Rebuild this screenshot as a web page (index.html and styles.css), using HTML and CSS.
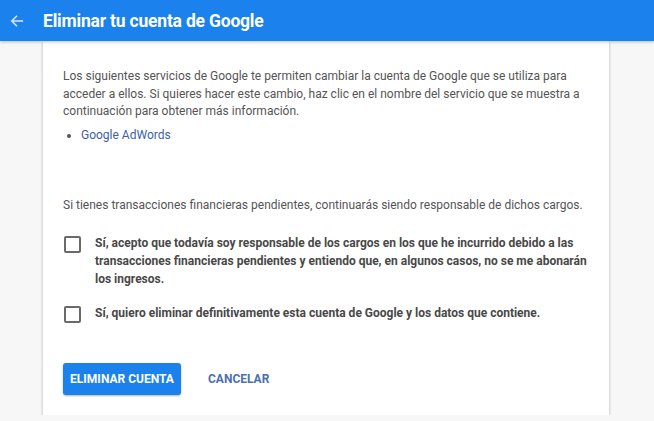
FILE: index.html
```html
<!DOCTYPE html>
<html>
<head>
<meta charset="utf-8">
<link rel="stylesheet" href="styles.css">
</head>
<body>
<div class="topbar">
	<span class="back">
		<svg width="14" height="14" viewBox="0 0 16 16"><path d="M15 8H2.5M8 2L2 8l6 6" fill="none" stroke="#d6e8fb" stroke-width="1.8"/></svg>
	</span>
	<span class="title">Eliminar tu cuenta de Google</span>
</div>

<div class="card">
	<p class="txt">Los siguientes servicios de Google te permiten cambiar la cuenta de Google que se utiliza para acceder a ellos. Si quieres hacer este cambio, haz clic en el nombre del servicio que se muestra a continuación para obtener más información.</p>
	<ul class="services">
		<li><a href="#">Google AdWords</a></li>
	</ul>

	<p class="txt pending">Si tienes transacciones financieras pendientes, continuarás siendo responsable de dichos cargos.</p>

	<div class="check">
		<span class="box"></span>
		<span class="lbl">Sí, acepto que todavía soy responsable de los cargos en los que he incurrido debido a las transacciones financieras pendientes y entiendo que, en algunos casos, no se me abonarán los ingresos.</span>
	</div>
	<div class="check">
		<span class="box"></span>
		<span class="lbl">Sí, quiero eliminar definitivamente esta cuenta de Google y los datos que contiene.</span>
	</div>

	<div class="actions">
		<button class="btn primary">ELIMINAR CUENTA</button>
		<button class="btn flat">CANCELAR</button>
	</div>
</div>
</body>
</html>
```

FILE: styles.css
```css
body {
	margin: 0;
	background-color: #f7f7f7;
	font-family: Roboto, "Liberation Sans", sans-serif;
	overflow: hidden;
}
.topbar {
	height: 41px;
	background-color: #1b82ed;
	display: flex;
	align-items: center;
	box-shadow: 0 1px 3px rgba(0,0,0,0.25);
	position: relative;
	z-index: 2;
}
.back {
	width: 43px;
	display: flex;
	justify-content: center;
	padding-right: 10px;
	box-sizing: border-box;
}
.back svg {
	display: block;
}
.title {
	color: #fff;
	font-size: 17.5px;
	font-weight: bold;
	letter-spacing: -0.2px;
}
.card {
	margin-left: 43px;
	width: 566px;
	background-color: #fff;
	box-sizing: border-box;
	padding: 27px 14px 20px 20px;
	box-shadow: 0 1px 3px rgba(0,0,0,0.28);
	height: 374px;
}
.txt {
	margin: 0;
	font-size: 12px;
	line-height: 17.7px;
	color: #555;
}
.services {
	margin: 6px 0 0 0;
	padding-left: 18px;
	font-size: 12px;
	line-height: 17.5px;
	color: #555;
}
.services a {
	color: #3c5fa8;
	text-decoration: none;
}
.pending {
	margin-top: 52px;
}
.check {
	display: flex;
	align-items: flex-start;
	margin-top: 21px;
}
.check + .check {
	margin-top: 17px;
}
.box {
	flex: none;
	width: 13px;
	height: 13px;
	border: 2px solid #6a6a6a;
	border-radius: 2px;
	margin: 1px 14px 0 1px;
}
.lbl {
	font-size: 12px;
	line-height: 17.7px;
	font-weight: bold;
	color: #484848;
}
.actions {
	display: flex;
	align-items: center;
	gap: 12px;
	margin-top: 40px;
}
.btn {
	font-family: Roboto, "Liberation Sans", sans-serif;
	font-size: 12px;
	font-weight: bold;
	border: none;
	border-radius: 3px;
	height: 32px;
	padding: 0 15px;
}
.primary {
	background-color: #1b82ed;
	color: #fff;
	box-shadow: 0 1px 2px rgba(0,0,0,0.3);
	width: 118px;
	padding: 0;
}
.flat {
	background: none;
	color: #4a70b0;
}
```
